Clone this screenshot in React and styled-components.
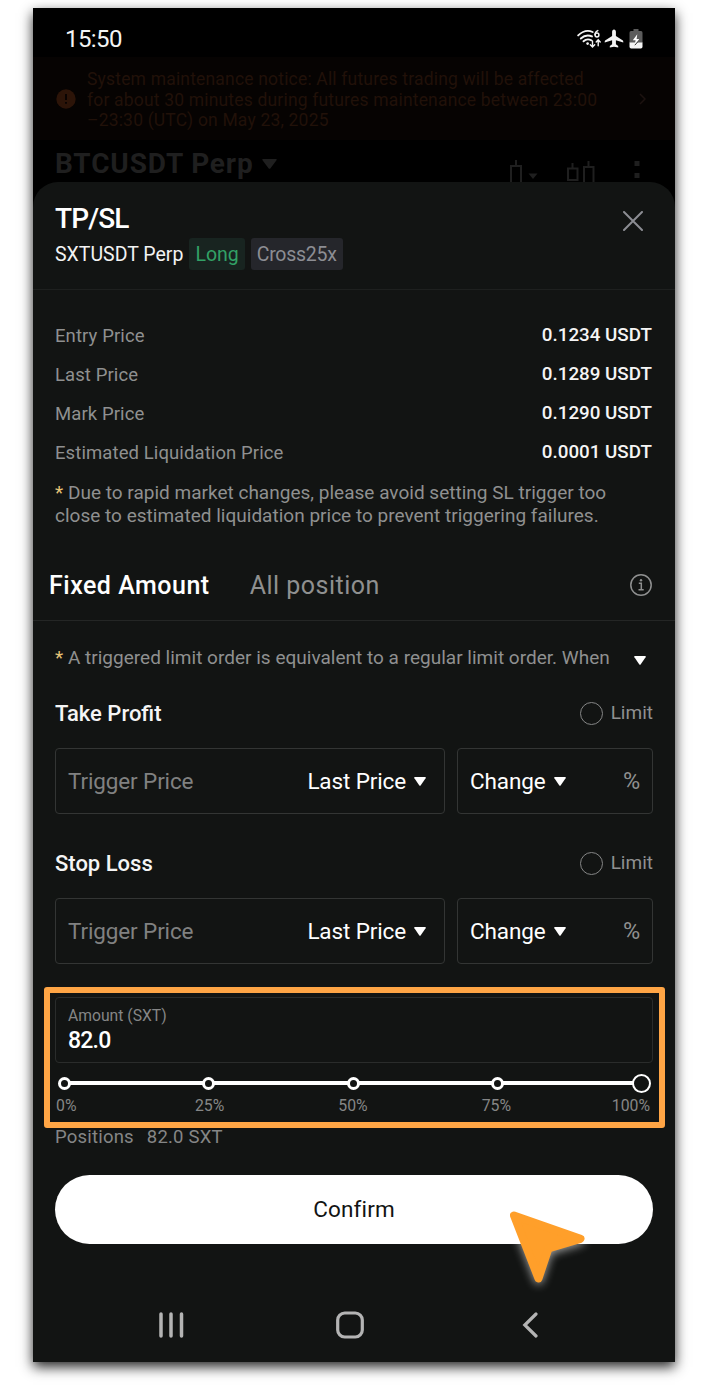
import { Fragment, useState } from 'react';
import styled, { createGlobalStyle } from 'styled-components';

const GlobalStyle = createGlobalStyle`
  * {
    box-sizing: border-box;
  }
  body {
    margin: 0;
    background: #fff;
    font-family: Roboto, 'Noto Sans', sans-serif;
  }
`;

const Page = styled.div`
  width: 710px;
  height: 1392px;
  padding: 8px 35px 0 33px;
  overflow: hidden;
`;
const Phone = styled.div`
  display: flex;
  flex-direction: column;
  width: 642px;
  height: 1354px;
  background: #000;
  box-shadow: 0 5px 12px rgba(0, 0, 0, 0.85);
`;

const StatusBar = styled.div`
  display: flex;
  justify-content: space-between;
  align-items: center;
  height: 49px;
  padding: 13px 32px 0 32px;
  color: #f4f4f4;
  font-size: 24px;
  letter-spacing: -0.6px;
`;
const StatusIcons = styled.div`
  display: flex;
  align-items: center;
  & svg:nth-child(2) {
    margin: 0 5px 0 2px;
  }
`;

const Banner = styled.div`
  display: flex;
  align-items: center;
  height: 83px;
  padding: 0 26px 0 23px;
  background: #060302;
  color: #211109;
  & svg {
    flex: none;
  }
`;
const BannerText = styled.p`
  flex: 1;
  margin: 3px 0 0 11px;
  font-size: 17.5px;
  line-height: 20.7px;
  letter-spacing: 0.18px;
  white-space: pre;
`;

const PairBar = styled.div`
  display: flex;
  align-items: flex-start;
  height: 42px;
  padding: 7px 33px 0 22px;
  overflow: hidden;
  color: #1f1f1f;
`;
const PairName = styled.div`
  flex: 1;
  display: flex;
  align-items: center;
  gap: 8px;
  font-size: 28px;
  font-weight: 700;
  line-height: 34px;
  letter-spacing: 0.85px;
`;

const Sheet = styled.div`
  flex: 1;
  display: flex;
  flex-direction: column;
  background: #121413;
  border-radius: 25px 25px 0 0;
`;
const SheetHead = styled.div`
  display: flex;
  justify-content: space-between;
  height: 108px;
  padding: 20px 32px 0 22px;
  border-bottom: 1px solid #1e201f;
`;
const Title = styled.h1`
  margin: 0;
  color: #fff;
  font-size: 28px;
  font-weight: 500;
  line-height: 34px;
  letter-spacing: -0.9px;
`;
const Subtitle = styled.div`
  display: flex;
  align-items: center;
  gap: 6px;
  margin-top: 2px;
  color: #f3f3f3;
  font-size: 19.5px;
`;
const Badge = styled.span`
  height: 32px;
  padding: 0 6px;
  border-radius: 3px;
  background: ${(props) => (props.$long ? '#182420' : '#25262b')};
  color: ${(props) => (props.$long ? '#32a166' : '#8c8d93')};
  line-height: 33px;
  letter-spacing: ${(props) => (props.$long ? '0' : '-0.25px')};
`;
const CloseIcon = styled.svg`
  margin-top: 9px;
`;

const InfoList = styled.div`
  padding: 26px 23px 0 22px;
`;
const InfoRow = styled.div`
  display: flex;
  justify-content: space-between;
  align-items: center;
  height: 39.1px;
  color: #8f9090;
  font-size: 18.5px;
  letter-spacing: 0.1px;
`;
const InfoValue = styled.span`
  padding-bottom: 1px;
  color: #f5f5f5;
  font-weight: 500;
  font-size: 18.8px;
  letter-spacing: 0;
`;
const Note = styled.p`
  margin: 0;
  padding: ${(props) => props.$pad || '0'};
  color: #8f9090;
  font-size: 19px;
  line-height: 22.5px;
  letter-spacing: 0.01px;
  white-space: pre;
`;
const Star = styled.span`
  color: #e6c478;
`;

const Tabs = styled.div`
  display: flex;
  align-items: center;
  gap: 40px;
  height: 71px;
  margin-top: 23px;
  padding: 0 23px 0 16px;
  border-bottom: 1px solid #242625;
  & svg {
    margin-left: auto;
  }
`;
const Tab = styled.span`
  color: ${(props) => (props.$active ? '#fff' : '#8f9090')};
  font-size: 25px;
  font-weight: ${(props) => (props.$active ? 500 : 400)};
  letter-spacing: 0.5px;
  cursor: pointer;
`;

const Form = styled.div`
  flex: 1;
  padding: 26px 22px 0;
`;
const NoteRow = styled.div`
  display: flex;
  justify-content: space-between;
  align-items: center;
  padding-right: 7px;
  color: #fff;
  & svg {
    margin-top: 4px;
  }
`;
const FieldHead = styled.div`
  display: flex;
  justify-content: space-between;
  align-items: center;
  height: 34px;
  margin-top: ${(props) => props.$top}px;
  color: #f5f5f5;
  font-size: 22px;
  font-weight: 500;
`;
const LimitToggle = styled.span`
  display: flex;
  align-items: center;
  gap: 8px;
  margin-top: -1px;
  color: #8f9090;
  font-size: 19px;
  font-weight: 400;
  line-height: 22px;
`;
const Radio = styled.span`
  width: 23px;
  height: 23px;
  margin-top: 1px;
  border: 1.5px solid #858686;
  border-radius: 50%;
`;
const FieldRow = styled.div`
  display: grid;
  grid-template-columns: 390px 1fr;
  gap: 12px;
  margin-top: 17px;
`;
const Box = styled.div`
  display: flex;
  justify-content: space-between;
  align-items: center;
  height: 66px;
  padding: 0 ${(props) => props.$right || 18}px 0 12px;
  border: 1px solid #333534;
  border-radius: 4px;
  color: #808181;
  font-size: 22.5px;
  letter-spacing: -0.13px;
`;
const Select = styled.span`
  display: flex;
  align-items: center;
  gap: 8px;
  color: #fff;
  & svg {
    margin-top: 1px;
  }
`;
const Percent = styled.span`
  color: #8f9090;
  font-size: 23.5px;
`;

// orange callout drawn around the amount block
const Highlight = styled.div`
  height: 141px;
  margin: 23px -12px 0 -11px;
  padding: 4px 6px 0 5px;
  border: 6px solid #ffa545;
  border-radius: 3px;
`;
const AmountBox = styled.div`
  height: 66px;
  padding: 8px 12px;
  border: 1px solid #2a2c2b;
  border-radius: 4px;
`;
const AmountLabel = styled.div`
  color: #858686;
  font-size: 15.7px;
  line-height: 20px;
`;
const AmountValue = styled.div`
  color: #fff;
  font-size: 23px;
  font-weight: 500;
  line-height: 29px;
  letter-spacing: -0.8px;
`;
const Track = styled.div`
  display: flex;
  align-items: center;
  height: 19px;
  margin: 11px 5px 0 3px;
`;
const Segment = styled.span`
  flex: 1;
  height: 4px;
  margin: 0 -1px;
  background: #fff;
`;
const Knob = styled.span`
  width: ${(props) => (props.$current ? 19 : 13)}px;
  height: ${(props) => (props.$current ? 19 : 13)}px;
  margin: 0 ${(props) => (props.$current ? -3 : 0)}px;
  border: ${(props) => (props.$current ? 2 : 3)}px solid #fff;
  border-radius: 50%;
  background: #121413;
  z-index: 1;
`;
const Marks = styled.div`
  display: grid;
  grid-template-columns: 82px 1fr 1fr 1fr 82px;
  margin: 2px 3px 0 1px;
  color: #858686;
  font-size: 15.8px;
  line-height: 21px;
  text-align: center;
  & span:first-child {
    text-align: left;
  }
  & span:last-child {
    text-align: right;
  }
`;
const Positions = styled.div`
  display: flex;
  gap: 13px;
  margin-top: -3px;
  color: #858686;
  font-size: 18.5px;
  line-height: 24px;
  letter-spacing: 0.2px;
`;
const Confirm = styled.button`
  display: block;
  width: 100%;
  height: 69px;
  margin-top: 26px;
  padding: 0;
  border: 0;
  border-radius: 35px;
  background: #fff;
  color: #121413;
  font-family: inherit;
  font-size: 22.5px;
  letter-spacing: 0.15px;
`;
const Pointer = styled.svg`
  position: absolute;
  left: 494px;
  top: 1196px;
  filter: drop-shadow(0 2px 5px rgba(255, 255, 255, 0.6));
`;

const NavBar = styled.div`
  display: flex;
  align-items: center;
  gap: 151px;
  height: 76px;
  padding: 2px 0 0 124px;
  & svg:last-child {
    margin-left: 7px;
  }
`;

const Caret = ({ w = 12, h = 9 }) => (
  <svg width={w} height={h} viewBox="0 0 12 9" preserveAspectRatio="none">
    <path d="M.8 0h10.400q1 .2.400 1.200L6.800 8.300q-.8 1-1.600 0L.4 1.200Q-.2.200.8 0z" fill="currentColor" />
  </svg>
);

const WifiIcon = () => (
  <svg width="25" height="20" viewBox="0 0 25 20" fill="none" stroke="#f4f4f4" strokeLinecap="round">
    <path d="M1.200 6.400Q8.300-.3 15.600 3" strokeWidth="1.900" />
    <path d="M3.800 9.500Q9 4.700 15 7.400" strokeWidth="1.900" />
    <path d="M6.500 12.300Q10 9 14.400 11.300" strokeWidth="1.900" />
    <circle cx="10.600" cy="14.600" r="1.300" fill="#f4f4f4" stroke="none" />
    <path d="M20.800 1.600Q18.300 2.400 18 5.700" strokeWidth="1.500" />
    <circle cx="20" cy="6" r="1.900" strokeWidth="1.500" />
    <path d="M15.500 12v5.500M13.300 15.800l2.200 2.200 2.200-2.200M21.200 16.700v-5.500M19.200 13l2-2.200 2 2.200" strokeWidth="1.400" />
  </svg>
);

const PlaneIcon = () => (
  <svg width="20" height="20" viewBox="0 0 20 20">
    <path
      d="M10 .4c1.200 0 1.900 1 1.900 2.400v4.100l6.600 4.400c.6.400.8.900.8 2.100l-7.400-2.100v4l2.300 1.700v1.600L10 17.700l-4.200.9V17l2.300-1.700v-4L.7 13.400c0-1.200.2-1.700.8-2.100l6.600-4.400V2.800C8.100 1.400 8.800.4 10 .4z"
      fill="#f4f4f4"
    />
  </svg>
);

const BatteryIcon = () => (
  <svg width="14" height="20" viewBox="0 0 14 20">
    <path d="M4.500 0h5v2H12q1.500 0 1.500 1.700V14H.5V3.700Q.5 2 2 2h2.500z" fill="#5c5c5c" />
    <path d="M.5 13.500h13v4.300q0 1.700-1.700 1.700H2.200Q.5 19.500.5 17.800z" fill="#f4f4f4" />
    <path d="M8.300 5.300 3.800 11.300h2.800l-.9 4.900 4.500-6.300H7.600z" fill="#fff" />
    <path d="M5.800 16.200 8.800 12.800" stroke="#333" strokeWidth="1" />
  </svg>
);

const INFO = [
  ['Entry Price', '0.1234 USDT'],
  ['Last Price', '0.1289 USDT'],
  ['Mark Price', '0.1290 USDT'],
  ['Estimated Liquidation Price', '0.0001 USDT'],
];
const STEPS = [0, 25, 50, 75, 100];

const TriggerField = ({ label, top }) => (
  <>
    <FieldHead $top={top}>
      {label}
      <LimitToggle>
        <Radio />
        Limit
      </LimitToggle>
    </FieldHead>
    <FieldRow>
      <Box>
        Trigger Price
        <Select>
          Last Price <Caret />
        </Select>
      </Box>
      <Box $right={12}>
        <Select>
          Change <Caret />
        </Select>
        <Percent>%</Percent>
      </Box>
    </FieldRow>
  </>
);

const AmountSlider = ({ value }) => (
  <>
    <Track>
      {STEPS.map((step, i) => (
        <Fragment key={step}>
          {i > 0 && <Segment />}
          <Knob $current={step === value} />
        </Fragment>
      ))}
    </Track>
    <Marks>
      {STEPS.map((step) => (
        <span key={step}>{step}%</span>
      ))}
    </Marks>
  </>
);

const App = () => {
  const [tab, setTab] = useState('fixed');

  return (
    <Page>
      <GlobalStyle />
      <Phone>
        <StatusBar>
          15:50
          <StatusIcons>
            <WifiIcon />
            <PlaneIcon />
            <BatteryIcon />
          </StatusIcons>
        </StatusBar>
        <Banner>
          <svg width="20" height="20" viewBox="0 0 20 20">
            <circle cx="10" cy="10" r="9.700" fill="#2c1408" />
            <path d="M10 5v6M10 13v1.800" stroke="#090302" strokeWidth="2" />
          </svg>
          <BannerText>
            {'System maintenance notice: All futures trading will be affected\nfor about 30 minutes during futures maintenance between 23:00\n–23:30 (UTC) on May 23, 2025'}
          </BannerText>
          <svg width="12" height="14" viewBox="0 0 12 14" fill="none" stroke="#1c1210" strokeWidth="1.500">
            <path d="M3 2l5 5-5 5" />
          </svg>
        </Banner>
        <PairBar>
          <PairName>
            BTCUSDT Perp <Caret w={15} h={10} />
          </PairName>
          <svg width="132" height="36" viewBox="0 0 132 36" fill="none" stroke="#1f1f1f" strokeWidth="2">
            <path d="M6 13v6M1 40V19h10v21" />
            <path d="M18.500 26.500h9l-4.500 5.500z" fill="#1f1f1f" stroke="none" />
            <path d="M62.500 16v5M58 21.500h9.500V33H58zM78.500 14v6M74 40V20h9.500v20" />
            <path d="M124.500 14h5v5h-5zM124.500 26h5v5h-5z" fill="#1f1f1f" stroke="none" />
          </svg>
        </PairBar>

        <Sheet>
          <SheetHead>
            <div>
              <Title>TP/SL</Title>
              <Subtitle>
                SXTUSDT Perp
                <Badge $long>Long</Badge>
                <Badge>Cross25x</Badge>
              </Subtitle>
            </div>
            <CloseIcon width="20" height="20" viewBox="0 0 20 20" stroke="#8c8d93" strokeWidth="2" strokeLinecap="round">
              <path d="M1 1l18 18M19 1L1 19" />
            </CloseIcon>
          </SheetHead>

          <InfoList>
            {INFO.map(([label, value]) => (
              <InfoRow key={label}>
                {label}
                <InfoValue>{value}</InfoValue>
              </InfoRow>
            ))}
          </InfoList>
          <Note $pad="10px 0 0 22px">
            <Star>*</Star>
            {' Due to rapid market changes, please avoid setting SL trigger too'}
            <br />
            close to estimated liquidation price to prevent triggering failures.
          </Note>

          <Tabs>
            <Tab $active={tab === 'fixed'} onClick={() => setTab('fixed')}>
              Fixed Amount
            </Tab>
            <Tab $active={tab === 'all'} onClick={() => setTab('all')}>
              All position
            </Tab>
            <svg width="22" height="22" viewBox="0 0 22 22" fill="none" stroke="#8f9090" strokeWidth="1.500">
              <circle cx="11" cy="11" r="10.200" />
              <path d="M8.800 9.300h2.500v6.200M8.500 15.800h5.200" />
              <circle cx="11" cy="6.300" r="1.200" fill="#8f9090" stroke="none" />
            </svg>
          </Tabs>

          <Form>
            <NoteRow>
              <Note>
                <Star>*</Star>
                {' A triggered limit order is equivalent to a regular limit order. When'}
              </Note>
              <Caret />
            </NoteRow>
            <TriggerField label="Take Profit" top={27} />
            <TriggerField label="Stop Loss" top={33} />

            <Highlight>
              <AmountBox>
                <AmountLabel>Amount (SXT)</AmountLabel>
                <AmountValue>82.0</AmountValue>
              </AmountBox>
              <AmountSlider value={100} />
            </Highlight>
            <Positions>
              <span>Positions</span>
              <span>82.0 SXT</span>
            </Positions>
            <Confirm>Confirm</Confirm>
          </Form>

          <NavBar>
            <svg width="28" height="28" viewBox="0 0 28 28" stroke="#b4b4b4" strokeWidth="3.500" strokeLinecap="round">
              <path d="M4 3v22M14 3v22M24.500 3v22" />
            </svg>
            <svg width="28" height="28" viewBox="0 0 28 28" fill="none" stroke="#b4b4b4" strokeWidth="3.200">
              <rect x="1.700" y="2" width="24.600" height="24" rx="7" />
            </svg>
            <svg width="16" height="28" viewBox="0 0 16 28" fill="none" stroke="#b4b4b4" strokeWidth="3.200" strokeLinecap="round">
              <path d="M14 3L2.800 14 14 25" />
            </svg>
          </NavBar>
        </Sheet>
      </Phone>
      <Pointer width="110" height="110" viewBox="0 0 110 110">
        <path
          d="M20 19.500L86.500 42.800L54.500 52.500L44.500 82.500z"
          fill="#ff9f2a"
          stroke="#ff9f2a"
          strokeWidth="8"
          strokeLinejoin="round"
        />
      </Pointer>
    </Page>
  );
};

export default App;
